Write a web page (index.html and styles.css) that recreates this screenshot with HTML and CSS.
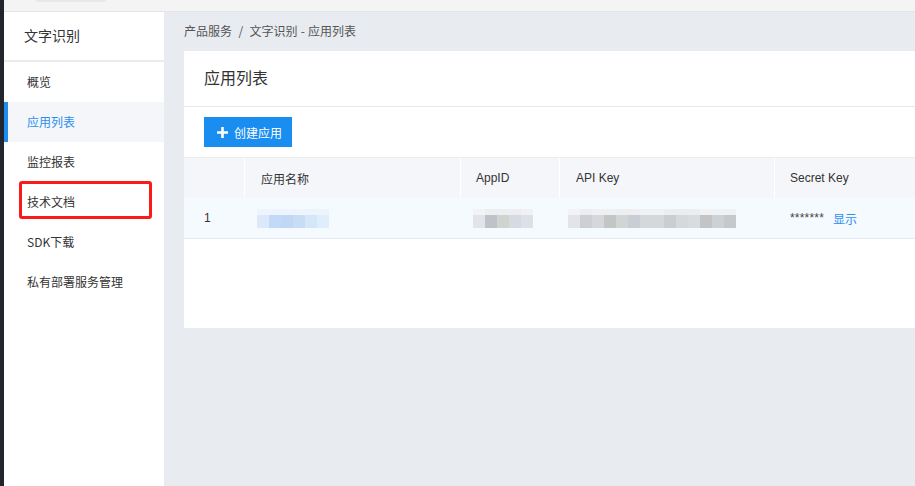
FILE: index.html
```html
<!DOCTYPE html>
<html lang="zh">
<head>
<meta charset="utf-8">
<title>应用列表</title>
<link rel="stylesheet" href="styles.css">
</head>
<body>
<div class="strip"></div>
<div class="page">
  <div class="topbar"><div class="topbar-tab"></div></div>
  <div class="body">
    <aside class="sidebar">
      <div class="side-title">文字识别</div>
      <ul class="nav">
        <li class="nav-item">概览</li>
        <li class="nav-item active">应用列表</li>
        <li class="nav-item">监控报表</li>
        <li class="nav-item marked">技术文档<span class="mark"></span></li>
        <li class="nav-item">SDK下载</li>
        <li class="nav-item">私有部署服务管理</li>
      </ul>
    </aside>
    <main class="main">
      <div class="crumb">产品服务&nbsp;&nbsp;/&nbsp;&nbsp;文字识别 - 应用列表</div>
      <section class="card">
        <div class="card-head">应用列表</div>
        <div class="toolbar">
          <button class="btn">
            <svg class="plus" width="11" height="11" viewBox="0 0 11 11"><path d="M5.5 0v11M0 5.5h11" stroke="#fff" stroke-width="2.6"/></svg>
            创建应用
          </button>
        </div>
        <div class="table">
          <div class="row head">
            <div class="cell c1"></div>
            <div class="cell c2">应用名称</div>
            <div class="cell c3">AppID</div>
            <div class="cell c4">API Key</div>
            <div class="cell c5">Secret Key</div>
          </div>
          <div class="row data">
            <div class="cell c1 num">1</div>
            <div class="cell c2"><span class="blur blur-name"></span></div>
            <div class="cell c3"><span class="blur blur-id"></span></div>
            <div class="cell c4"><span class="blur blur-key"></span></div>
            <div class="cell c5"><span class="stars">*******</span><a class="show">显示</a></div>
          </div>
        </div>
      </section>
    </main>
  </div>
</div>
</body>
</html>
```
FILE: styles.css
```css
* { box-sizing: border-box; }
html, body { margin: 0; padding: 0; height: 100%; overflow: hidden; }
body {
  display: flex;
  font-family: "Noto Sans CJK SC", "Liberation Sans", sans-serif;
  color: #333;
  background: #e8ebf0;
}
.strip { width: 4px; flex: none; background: #22252c; height: 100%; }
.page { flex: 1; display: flex; flex-direction: column; height: 100%; min-width: 0; }
.topbar {
  height: 12px; flex: none; background: #f4f4f4; border-bottom: 1px solid #e4e4e4;
  position: relative;
}
.topbar-tab {
  position: absolute; left: 32px; top: 0; width: 70px; height: 2px;
  background: #e8e8e8; border-radius: 0 0 4px 4px;
}
.body { flex: 1; display: flex; min-height: 0; }
.sidebar { width: 160px; flex: none; background: #fff; }
.side-title {
  height: 50px; border-bottom: 2px solid #ebebeb;
  padding-left: 20px; font-size: 14px; line-height: 46px; color: #333;
}
.nav { list-style: none; margin: 0; padding: 0; }
.nav-item {
  height: 40px; line-height: 40px; padding-left: 23px; font-size: 12px; color: #333;
  position: relative;
}
.nav-item.active { background: #f4f6fa; color: #2b8ff2; border-left: 4px solid #1e8cf0; padding-left: 19px; }
.mark {
  position: absolute; left: 15px; top: -1px; width: 133px; height: 38px;
  border: 3px solid #fa1a1a; border-radius: 3px;
}
.main { flex: 1; min-width: 0; padding-left: 20px; }
.crumb { height: 39px; line-height: 38px; font-size: 12px; color: #555; word-spacing: 0.5px; }
.card { background: #fff; height: 277px; width: 760px; }
.card-head {
  height: 56px; line-height: 52px; padding-left: 20px; font-size: 16px; color: #333;
  border-bottom: 1px solid #e8e8e8;
}
.toolbar { height: 50px; padding: 10px 20px 0; }
.btn {
  height: 30px; width: 88px; border: 0; border-radius: 0; background: #1a8df0; color: #fff;
  font-family: inherit; font-size: 12px; display: flex; align-items: center; padding: 0 0 0 13px; gap: 6px;
}
.plus { display: block; }
.table { border-top: 1px solid #ececec; font-family: "Liberation Sans", "Noto Sans CJK SC", sans-serif; font-size: 12px; }
.row { display: flex; }
.row.head { height: 40px; background: #f5f6fa; }
.row.data { height: 41px; background: #f5faff; border-bottom: 1px solid #e6ebf1; }
.cell { display: flex; align-items: center; padding-left: 16px; color: #333; }
.row.head .cell + .cell { border-left: 1px solid #fff; }
.row.data .cell + .cell { border-left: 1px solid transparent; }
.c1 { width: 60px; padding-left: 20px; }
.c2 { width: 216px; padding-left: 12px; }
.row.head .c2 { padding-left: 16px; }
.c3 { width: 99px; padding-left: 12px; }
.row.head .c3 { padding-left: 15px; }
.c4 { width: 215px; padding-left: 8px; }
.row.head .c4 { padding-left: 16px; }
.c5 { flex: 1; padding-left: 15px; }
.num { font-size: 12px; }
.blur { display: block; height: 19px; margin-top: 1px; }
.blur-name {
  width: 72px;
  background:
    linear-gradient(#eef4fc, #eef4fc) 0 0 / 100% 6px no-repeat,
    linear-gradient(90deg, #dde9fa 0 12px, #c3d9f8 12px 24px, #c2d7f6 24px 36px, #c9dcf6 36px 48px, #d3e6fa 48px 60px, #dfedfc 60px 72px) 0 6px / 100% 13px no-repeat;
}
.blur-id {
  width: 60px;
  background:
    linear-gradient(90deg, #f2f3f6 0 12px, #eceef2 12px 48px, #f0f1f4 48px 60px) 0 0 / 100% 6px no-repeat,
    linear-gradient(90deg, #e2e4e8 0 12px, #bfc3c9 12px 24px, #d0d3d0 24px 36px, #d6dbe2 36px 48px, #dde0e6 48px 60px) 0 6px / 100% 13px no-repeat;
}
.blur-key {
  width: 168px;
  background:
    linear-gradient(90deg, #f2f3f6 0 12px, #ebedf0 12px 24px, #eef0f4 24px 48px, #eceef0 48px 72px, #f0f1f3 72px 96px, #ebedef 96px 132px, #f0f1f4 132px 168px) 0 0 / 100% 6px no-repeat,
    linear-gradient(90deg, #e4e4e8 0 12px, #cdcfd5 12px 24px, #d5d7da 24px 36px, #c4c6c4 36px 48px, #d2d5d5 48px 60px, #c8ced4 60px 72px, #d5d8da 72px 96px, #c9cfcf 96px 108px, #d5d9dc 108px 120px, #d8dcdf 120px 132px, #c2c4c6 132px 144px, #cbd1d5 144px 156px, #c6c8ca 156px 168px) 0 6px / 100% 13px no-repeat;
}
.stars { font-size: 12px; color: #444; letter-spacing: 0.2px; }
.show { color: #2b8ff2; margin-left: 9px; font-family: "Noto Sans CJK SC", sans-serif; cursor: pointer; }
```
